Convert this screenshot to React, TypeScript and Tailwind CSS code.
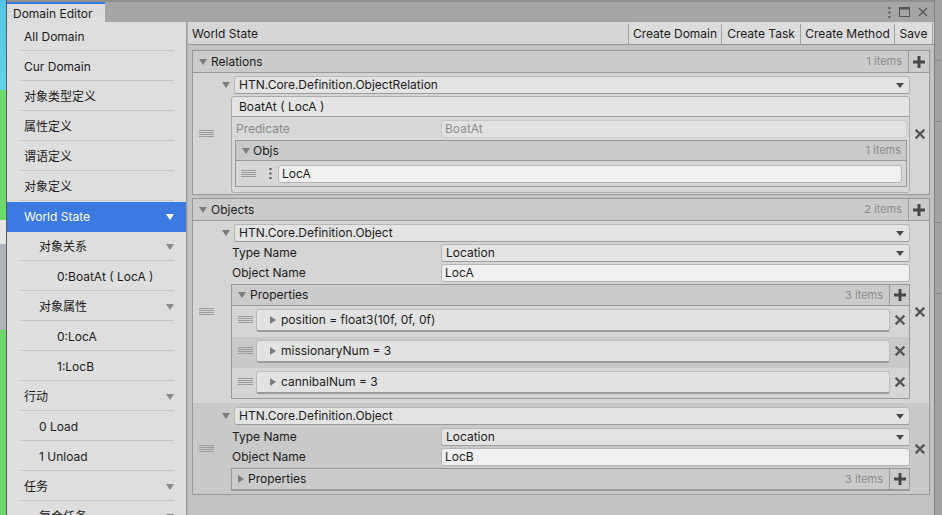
import React from "react";

function DownTri({ c = "#7c7c7c" }: { c?: string }) {
  return (
    <svg width={8} height={6} viewBox="0 0 8 6" className="shrink-0">
      <path d="M0 0H8L4 6Z" fill={c} />
    </svg>
  );
}
function RightTri({ c = "#7c7c7c" }: { c?: string }) {
  return (
    <svg width={6} height={8} viewBox="0 0 6 8" className="shrink-0">
      <path d="M0 0L6 4L0 8Z" fill={c} />
    </svg>
  );
}
function Handle() {
  return (
    <svg width={15} height={8} viewBox="0 0 15 8" className="shrink-0">
      <rect x={0} y={0} width={15} height={1} fill="#9c9c9c" />
      <rect x={0} y={2} width={15} height={1} fill="#9c9c9c" />
      <rect x={0} y={4} width={15} height={1} fill="#9c9c9c" />
      <rect x={0} y={6} width={15} height={1} fill="#9c9c9c" />
    </svg>
  );
}
function Plus() {
  return (
    <svg width={12} height={12} viewBox="0 0 12 12">
      <path d="M4.5 0h3v4.5H12v3H7.5V12h-3V7.5H0v-3h4.5z" fill="#474747" />
    </svg>
  );
}
function Cross() {
  return (
    <svg width={10} height={10} viewBox="0 0 10 10">
      <path d="M1.5 1.5L8.5 8.5M8.5 1.5L1.5 8.5" stroke="#555555" strokeWidth={2.3} strokeLinecap="square" />
    </svg>
  );
}
function SmallArrow() {
  return (
    <svg width={8} height={5} viewBox="0 0 8 5" className="shrink-0">
      <path d="M0 0H8L4 5Z" fill="#4a4a4a" />
    </svg>
  );
}

function Dropdown({ text }: { text: string }) {
  return (
    <div className="h-[18px] flex-1 flex items-center justify-between rounded-[3px] border border-[#b8b8b8] border-b-[#9c9c9c] bg-[#e3e3e3] pl-[4px] pr-[5px]">
      <span className="leading-none">{text}</span>
      <SmallArrow />
    </div>
  );
}
function TextField({ text }: { text: string }) {
  return (
    <div className="h-[18px] flex-1 flex items-center rounded-[3px] border border-[#b4b4b4] bg-[#f0f0f0] px-[3px]">
      <span className="leading-none">{text}</span>
    </div>
  );
}

function ListHeader({ title, count, open = true, plusW = "w-[21px]", h = "h-[22px]" }: { title: string; count: string; open?: boolean; plusW?: string; h?: string }) {
  return (
    <div className={`${h} flex items-stretch bg-[#cbcbcb] border-b border-[#999]`}>
      <div className="flex-1 flex items-center pl-[6px] gap-[4px]">
        {open ? <DownTri /> : <RightTri />}
        <span className="leading-none">{title}</span>
      </div>
      <div className="flex items-center pr-[6px] text-[11px] text-[#8c8c8c]">{count}</div>
      <div className={`${plusW} border-l border-[#999] flex items-center justify-center`}>
        <Plus />
      </div>
    </div>
  );
}

const sideItems: { t: string; lvl: number; arrow?: boolean; sel?: boolean }[] = [
  { t: "All Domain", lvl: 0 },
  { t: "Cur Domain", lvl: 0 },
  { t: "对象类型定义", lvl: 0 },
  { t: "属性定义", lvl: 0 },
  { t: "谓语定义", lvl: 0 },
  { t: "对象定义", lvl: 0 },
  { t: "World State", lvl: 0, arrow: true, sel: true },
  { t: "对象关系", lvl: 1, arrow: true },
  { t: "0:BoatAt ( LocA )", lvl: 2 },
  { t: "对象属性", lvl: 1, arrow: true },
  { t: "0:LocA", lvl: 2 },
  { t: "1:LocB", lvl: 2 },
  { t: "行动", lvl: 0, arrow: true },
  { t: "0 Load", lvl: 1 },
  { t: "1 Unload", lvl: 1 },
  { t: "任务", lvl: 0, arrow: true },
  { t: "复合任务", lvl: 1, arrow: true },
];

function SideItem({ t, lvl, arrow, sel }: { t: string; lvl: number; arrow?: boolean; sel?: boolean }) {
  const pad = lvl === 0 ? "pl-[17px]" : lvl === 1 ? "pl-[32px]" : "pl-[50px]";
  return (
    <div className={`h-[30px] shrink-0 relative flex items-center ${pad} pr-[12px] ${sel ? "bg-[#3b7ae0] text-white" : ""}`}>
      <span className="flex-1 leading-none">{t}</span>
      {arrow ? <DownTri c={sel ? "#ffffff" : "#8a8a8a"} /> : null}
      {!sel ? <div className="absolute left-[13px] right-[12px] bottom-[1px] h-px bg-[#c6c6c6]" /> : null}
    </div>
  );
}

function PropItem({ text, dark, h = "h-[31px]" }: { text: string; dark?: boolean; h?: string }) {
  return (
    <div className={`${h} flex items-start pt-[3px] ${dark ? "bg-[#c9c9c9]" : ""}`}>
      <div className="w-[24px] h-[22px] flex items-center justify-center pl-[2px]">
        <Handle />
      </div>
      <div className="w-[634px] h-[23px] flex items-center gap-[5px] pl-[13px] rounded-[3px] border border-[#bcbcbc] border-b-2 border-b-[#9a9a9a] bg-[#e2e2e2]">
        <RightTri />
        <span className="leading-none">{text}</span>
      </div>
      <div className="flex-1 h-[22px] flex items-center justify-center">
        <Cross />
      </div>
    </div>
  );
}

function FieldRow({ label, children, mt = "mt-[2px]" }: { label: string; children: React.ReactNode; mt?: string }) {
  return (
    <div className={`flex items-center h-[18px] ${mt}`}>
      <div className="w-[222px] pl-[13px] leading-none">{label}</div>
      {children}
    </div>
  );
}

export default function App() {
  return (
    <div className="flex w-[942px] h-[515px] overflow-hidden font-['Inter','Noto_Sans_CJK_SC',sans-serif] text-[12px] text-[#1b1b1b]">
      {/* scene strip left */}
      <div className="w-[7px] flex flex-col border-r border-[#5a5a5a]">
        <div className="h-[90px] bg-[linear-gradient(180deg,#52c6e6,#5fd4e6)]" />
        <div className="h-[130px] bg-[#6ddb6b]" />
        <div className="h-[24px] bg-[#e6e6e6]" />
        <div className="h-[86px] bg-[#aeb3ba]" />
        <div className="flex-1 bg-[#6bd96a]" />
      </div>

      {/* window */}
      <div className="w-[928px] flex flex-col bg-[#c2c2c2] border-r border-[#7e7e7e]">
        {/* tab bar */}
        <div className="h-[22px] shrink-0 flex items-end bg-[#a5a5a5] border-t-2 border-[#8f8f8f]">
          <div className="w-[98px] h-[20px] bg-[#dcdcdc] border-t-2 border-[#3a79d9] flex items-center pl-[6px] pt-px">
            <span className="leading-none">Domain Editor</span>
          </div>
          <div className="flex-1" />
          <div className="h-[20px] flex items-center gap-[8px] pr-[6px]">
            <svg width={3} height={11} viewBox="0 0 3 11">
              <rect x={0.5} y={0} width={2} height={2} fill="#555" />
              <rect x={0.5} y={4.5} width={2} height={2} fill="#555" />
              <rect x={0.5} y={9} width={2} height={2} fill="#555" />
            </svg>
            <svg width={11} height={10} viewBox="0 0 11 10">
              <rect x={0.5} y={0.5} width={10} height={9} fill="none" stroke="#555" />
              <rect x={0.5} y={0.5} width={10} height={2} fill="#555" />
            </svg>
            <svg width={10} height={10} viewBox="0 0 10 10">
              <path d="M1 1L9 9M9 1L1 9" stroke="#555" strokeWidth={1.3} />
            </svg>
          </div>
        </div>

        {/* body */}
        <div className="flex-1 flex min-h-0">
          {/* sidebar */}
          <div className="w-[180px] shrink-0 bg-[#dedede] border-r border-[#9a9a9a] flex flex-col overflow-hidden">
            {sideItems.map((it, i) => (
              <SideItem key={i} {...it} />
            ))}
          </div>

          {/* main */}
          <div className="flex-1 flex flex-col min-w-0 border-l border-[#b0b0b0]">
            {/* toolbar */}
            <div className="h-[23px] shrink-0 flex items-stretch bg-[#d6d6d6] border-b border-[#999] pt-px">
              <div className="flex-1 flex items-center pl-[4px]">
                <span className="leading-none">World State</span>
              </div>
              <div className="flex items-stretch bg-[#dcdcdc] border-r border-[#a2a2a2] mr-px pt-px">
                <div className="w-[93px] border-l border-[#a2a2a2] flex items-center justify-center">Create Domain</div>
                <div className="w-[79px] border-l border-[#a2a2a2] flex items-center justify-center">Create Task</div>
                <div className="w-[94px] border-l border-[#a2a2a2] flex items-center justify-center">Create Method</div>
                <div className="w-[38px] border-l border-[#a2a2a2] flex items-center justify-center">Save</div>
              </div>
            </div>

            {/* content */}
            <div className="flex-1 pt-[5px] pl-[4px] pr-[4px] flex flex-col">
              {/* Relations */}
              <div className="border border-[#999] bg-[#d5d5d5]">
                <ListHeader title="Relations" count="1 items" />
                <div className="flex">
                  <div className="w-[26px] flex items-center justify-center">
                    <Handle />
                  </div>
                  <div className="w-[691px] pt-[3px] pb-[1px]">
                    <div className="flex items-center">
                      <div className="w-[15px] pl-[3px] flex">
                        <DownTri />
                      </div>
                      <Dropdown text="HTN.Core.Definition.ObjectRelation" />
                    </div>
                    <div className="ml-[12px] mt-[2px] rounded-[3px] border border-[#ababab] bg-[#d8d8d8] pb-[5px]">
                      <div className="h-[20px] flex items-center pl-[7px] bg-[#e4e4e4] border-b border-[#a0a0a0] rounded-t-[3px]">
                        <span className="leading-none">BoatAt ( LocA )</span>
                      </div>
                      <div className="flex items-center h-[19px] mt-[2px] pr-[2px]">
                        <div className="w-[209px] pl-[4px] text-[#8a8a8a] leading-none">Predicate</div>
                        <div className="h-[18px] flex-1 flex items-center rounded-[3px] border border-[#c8c8c8] bg-[#e2e2e2] px-[3px] text-[#8d8d8d]">
                          <span className="leading-none">BoatAt</span>
                        </div>
                      </div>
                      <div className="ml-[3px] mr-[2px] mt-[2px] border border-[#999]">
                        <div className="h-[20px] flex items-center bg-[#cacaca] border-b border-[#999]">
                          <div className="flex-1 flex items-center pl-[6px] gap-[3px]">
                            <DownTri />
                            <span className="leading-none">Objs</span>
                          </div>
                          <div className="pr-[5px] text-[11px] text-[#8c8c8c]">1 items</div>
                        </div>
                        <div className="h-[25px] flex items-center bg-[#d6d6d6]">
                          <div className="pl-[5px] w-[27px]">
                            <Handle />
                          </div>
                          <div className="w-[15px] flex justify-center">
                            <svg width={3} height={11} viewBox="0 0 3 11">
                              <rect x={0.5} y={0} width={2} height={2} fill="#505050" />
                              <rect x={0.5} y={4.5} width={2} height={2} fill="#505050" />
                              <rect x={0.5} y={9} width={2} height={2} fill="#505050" />
                            </svg>
                          </div>
                          <div className="flex-1 flex pr-[4px]">
                            <TextField text="LocA" />
                          </div>
                        </div>
                      </div>
                    </div>
                  </div>
                  <div className="flex-1 flex items-center justify-center">
                    <Cross />
                  </div>
                </div>
              </div>

              {/* Objects */}
              <div className="mt-[3px] border border-[#999] bg-[#d5d5d5]">
                <ListHeader title="Objects" count="2 items" />
                {/* element 1 */}
                <div className="flex">
                  <div className="w-[26px] flex items-center justify-center">
                    <Handle />
                  </div>
                  <div className="w-[691px] pt-[3px] pb-[4px]">
                    <div className="flex items-center">
                      <div className="w-[15px] pl-[3px] flex">
                        <DownTri />
                      </div>
                      <Dropdown text="HTN.Core.Definition.Object" />
                    </div>
                    <FieldRow label="Type Name">
                      <Dropdown text="Location" />
                    </FieldRow>
                    <FieldRow label="Object Name">
                      <TextField text="LocA" />
                    </FieldRow>
                    <div className="ml-[12px] mt-[2px] border border-[#999]">
                      <ListHeader title="Properties" count="3 items" plusW="w-[20px]" h="h-[21px]" />
                      <div className="bg-[#d5d5d5]">
                        <PropItem text="position = float3(10f, 0f, 0f)" />
                        <PropItem text="missionaryNum = 3" dark />
                        <PropItem text="cannibalNum = 3" h="h-[30px]" />
                      </div>
                    </div>
                  </div>
                  <div className="flex-1 flex items-center justify-center">
                    <Cross />
                  </div>
                </div>
                {/* element 2 */}
                <div className="flex bg-[#c9c9c9]">
                  <div className="w-[26px] flex items-center justify-center">
                    <Handle />
                  </div>
                  <div className="w-[691px] pt-[4px] pb-[3px]">
                    <div className="flex items-center">
                      <div className="w-[15px] pl-[3px] flex">
                        <DownTri />
                      </div>
                      <Dropdown text="HTN.Core.Definition.Object" />
                    </div>
                    <FieldRow label="Type Name" mt="mt-[3px]">
                      <Dropdown text="Location" />
                    </FieldRow>
                    <FieldRow label="Object Name">
                      <TextField text="LocB" />
                    </FieldRow>
                    <div className="ml-[12px] mt-[2px] border border-[#999]">
                      <ListHeader title="Properties" count="3 items" open={false} plusW="w-[20px]" h="h-[21px]" />
                    </div>
                  </div>
                  <div className="flex-1 flex items-center justify-center">
                    <Cross />
                  </div>
                </div>
              </div>
            </div>
          </div>
        </div>
      </div>

      {/* right strip */}
      <div className="flex-1 bg-[#a3a3a3] flex flex-col">
        <div className="h-[60px]" />
        <div className="h-px bg-[#8a8a8a]" />
        <div className="h-[60px]" />
        <div className="h-px bg-[#8a8a8a]" />
        <div className="h-[100px]" />
        <div className="h-px bg-[#8a8a8a]" />
        <div className="h-[70px]" />
        <div className="h-px bg-[#8a8a8a]" />
      </div>
    </div>
  );
}
